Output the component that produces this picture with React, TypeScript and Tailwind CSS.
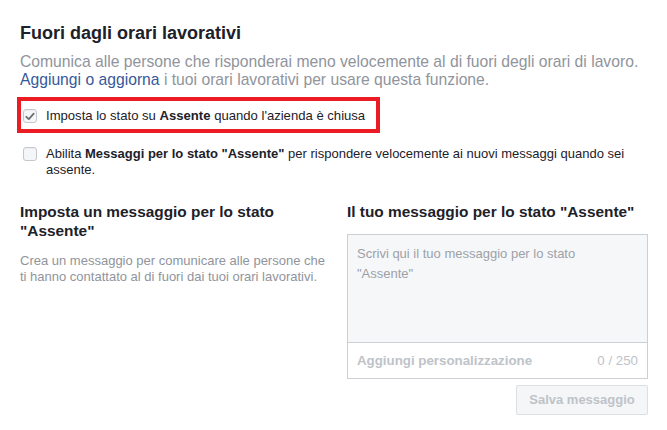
import React from 'react';

const Checkbox = ({ checked }: { checked?: boolean }) => (
  <span className="mt-[1px] flex h-[14px] w-[14px] shrink-0 items-center justify-center rounded-[3px] border border-[#c4c8ce] bg-[#f5f6f7] shadow-[inset_0_1px_1px_rgba(0,0,0,0.04)]">
    {checked && (
      <svg width="10" height="9" viewBox="0 0 10 9" fill="none">
        <path d="M1.3 4.8 L3.8 7.1 L8.7 1.6" stroke="#6b6f76" strokeWidth="1.8" strokeLinecap="round" strokeLinejoin="round" />
      </svg>
    )}
  </span>
);

export default function App() {
  return (
    <div className="h-[430px] w-[667px] bg-white pl-[20px] pr-[19px] pt-[22px] font-['Liberation_Sans',Arial,sans-serif] text-[#1d2129]">
      <h1 className="text-[18px] font-bold leading-[22px]">Fuori dagli orari lavorativi</h1>
      <p className="mt-[9px] text-[15.7px] leading-[18px] text-[#90949c]">
        Comunica alle persone che risponderai meno velocemente al di fuori degli orari di lavoro.{' '}
        <a className="text-[#365899]">Aggiungi o aggiorna</a> i tuoi orari lavorativi per usare questa funzione.
      </p>

      {/* riga evidenziata */}
      <div className="relative mt-[19px] flex items-start gap-[9px] pl-[3px] text-[13.1px] leading-[16px]">
        <Checkbox checked />
        <span>
          Imposta lo stato su <b>Assente</b> quando l'azienda è chiusa
        </span>
        <div className="pointer-events-none absolute left-[-3px] top-[-11px] h-[36px] w-[363px] border-4 border-[#ec1c24]" />
      </div>

      <div className="mt-[22px] flex items-start gap-[9px] pl-[3px] text-[13px] leading-[16px]">
        <Checkbox />
        <span>
          Abilita <b>Messaggi per lo stato "Assente"</b> per rispondere velocemente ai nuovi messaggi quando sei assente.
        </span>
      </div>

      <div className="mt-[24px] flex">
        <div className="w-[307px]">
          <h2 className="text-[15.4px] font-bold leading-[19px]">Imposta un messaggio per lo stato "Assente"</h2>
          <p className="mt-[13px] text-[13px] leading-[16px] text-[#90949c]">
            Crea un messaggio per comunicare alle persone che ti hanno contattato al di fuori dai tuoi orari lavorativi.
          </p>
        </div>
        <div className="ml-auto w-[301px]">
          <h2 className="text-[15.4px] font-bold leading-[19px]">Il tuo messaggio per lo stato "Assente"</h2>
          <div className="mt-[13px] border border-[#ccd0d5]">
            <div className="h-[108px] border-b border-[#ccd0d5] bg-[#f6f7f9] pl-[9px] pr-[40px] pt-[9px] text-[13px] leading-[20px] text-[#9da1a7]">
              Scrivi qui il tuo messaggio per lo stato "Assente"
            </div>
            <div className="flex h-[35px] items-center justify-between px-[9px] text-[13.3px] text-[#bec3c9]">
              <span className="font-bold">Aggiungi personalizzazione</span>
              <span>0 / 250</span>
            </div>
          </div>
          <div className="mt-[6px] flex justify-end">
            <button className="h-[30px] w-[132px] rounded-[2px] border border-[#dddfe2] bg-[#f5f6f7] text-[13px] font-bold text-[#bec3c9]">
              Salva messaggio
            </button>
          </div>
        </div>
      </div>
    </div>
  );
}
